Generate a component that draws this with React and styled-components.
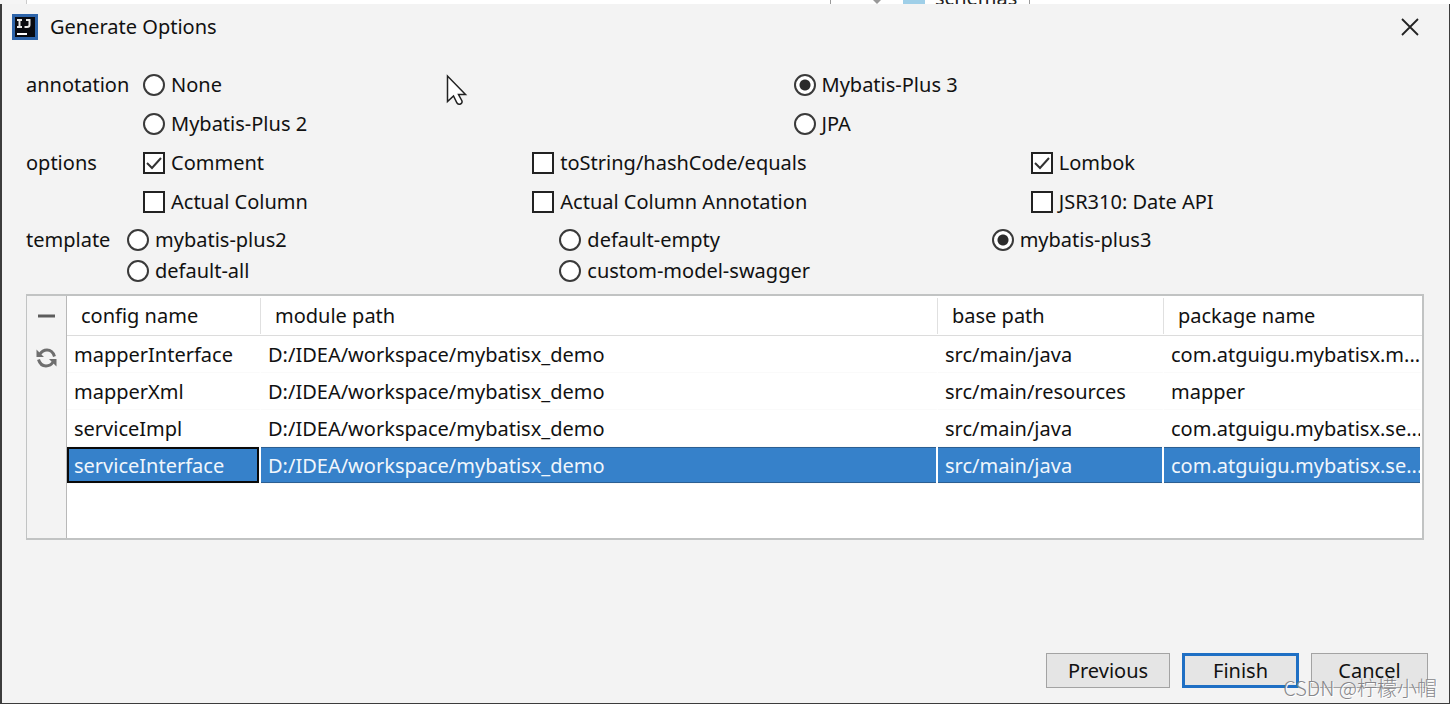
import React, { useState } from "react";
import styled, { createGlobalStyle, css } from "styled-components";

const GlobalStyle = createGlobalStyle`
  * { box-sizing: border-box; }
  body {
    margin: 0;
    background: #fff;
    color: #111;
    font-family: "Noto Sans", "Noto Sans CJK SC", sans-serif;
    font-size: 20px;
    line-height: 24px;
  }
`;

const Page = styled.div`
  position: relative;
  display: flex;
  flex-direction: column;
  min-height: 100vh;
`;

const EditorStrip = styled.div`
  display: flex;
  height: 4px;
  overflow: hidden;
  background: #fff;
`;

const StripGutter = styled.div`
  width: 27px;
  background: #f5f5f5;
  border-right: 1px solid #ccc;
`;

const StripSpace = styled.div`
  flex: 1;
  border-right: 1px solid #999;
`;

const StripTree = styled.div`
  display: flex;
  align-items: flex-end;
  width: 199px;
  padding-left: 40px;
  border-right: 1px solid #999;
`;

const StripArrow = styled.svg`
  width: 12px;
  height: 4px;
`;

const StripFolder = styled.div`
  width: 22px;
  height: 4px;
  margin: 0 10px 0 20px;
  background: #9fcfe8;
`;

const StripText = styled.span`
  height: 18px;
  line-height: 24px;
  color: #222;
`;

const StripRest = styled.div`
  width: 420px;
`;

const Dialog = styled.main`
  display: flex;
  flex: 1;
  flex-direction: column;
  margin-bottom: 2px;
  background: #f3f3f3;
  border: solid #3c3c3c;
  border-width: 0 1px 1px 2px;
`;

const TitleBar = styled.header`
  display: flex;
  align-items: center;
  height: 46px;
  padding: 0 25px 0 10px;
`;

const Logo = styled.svg`
  width: 26px;
  height: 26px;
`;

const Title = styled.h1`
  flex: 1;
  margin: 0 0 0 12px;
  font-size: 20px;
  font-weight: 400;
`;

const CloseButton = styled.button`
  display: flex;
  align-items: center;
  justify-content: center;
  width: 28px;
  height: 28px;
  padding: 0;
  background: none;
  border: 0;
`;

const Form = styled.div`
  display: flex;
  flex-direction: column;
  padding: 15px 25px 0 24px;
`;

const Group = styled.div`
  display: flex;
  align-items: flex-start;
  &:last-child {
    margin-top: 3px;
  }
`;

const GroupLabel = styled.div`
  width: ${(p) => p.$width}px;
  line-height: ${(p) => p.$row}px;
`;

const Choices = styled.div`
  display: grid;
  flex: 1;
  grid-template-columns: ${(p) => p.$columns};
  grid-auto-rows: ${(p) => p.$row}px;
`;

const Choice = styled.label`
  display: flex;
  align-items: center;
  gap: 6px;
  white-space: nowrap;
`;

const mark = css`
  appearance: none;
  flex: none;
  width: 22px;
  height: 22px;
  margin: 0;
  background: #fff;
`;

const Radio = styled.input`
  ${mark}
  border: 2px solid #3a3a3a;
  border-radius: 50%;
  &:checked {
    background: radial-gradient(circle, #2b2b2b 0 5px, #fff 6px);
  }
`;

const Check = styled.input`
  ${mark}
  border: 2px solid #222;
  &:checked {
    background: #fff
      url("data:image/svg+xml,%3Csvg xmlns='http://www.w3.org/2000/svg' viewBox='0 0 18 18'%3E%3Cpath d='M2 9l5 5 9-10' fill='none' stroke='%23333' stroke-width='2'/%3E%3C/svg%3E")
      center / 18px 18px no-repeat;
  }
`;

const TablePanel = styled.section`
  display: flex;
  height: 246px;
  margin: 8px 25px 0 24px;
  background: #fff;
  border: 2px solid #c1c3c3;
  border-width: 2px 2px 2px 1px;
`;

const ToolColumn = styled.div`
  display: flex;
  flex-direction: column;
  align-items: center;
  gap: 18px;
  width: 40px;
  padding-top: 8px;
  background: #f3f3f3;
  border-right: 1px solid #b8b8b8;
`;

const ToolButton = styled.button`
  display: flex;
  padding: 0;
  background: none;
  border: 0;
`;

const TableArea = styled.div`
  flex: 1;
  min-width: 0;
`;

const Table = styled.table`
  width: 100%;
  table-layout: fixed;
  border-collapse: separate;
  border-spacing: 0;
`;

const Column = styled.col`
  width: ${(p) => p.$width};
`;

const HeadCell = styled.th`
  height: 40px;
  padding: 0;
  font-weight: 400;
  text-align: left;
  border-bottom: 1px solid #dcdcdc;
`;

const HeadLabel = styled.div`
  padding: 6px 0 6px 14px;
  border-right: ${(p) => (p.$last ? "0" : "1px solid #e0e0e0")};
`;

const Cell = styled.td`
  height: 37px;
  padding: 2px 0 0 7px;
  overflow: hidden;
  white-space: nowrap;
  background-clip: padding-box;
  border-right: 2px solid #fff;
  border-bottom: 1px solid #fafafa;
  ${(p) =>
    p.$selected &&
    css`
      color: #f0f6fc;
      background-color: #3681ca;
      box-shadow: ${p.$focused
        ? "inset 0 0 0 2px #0a0a0a"
        : "inset 0 1px #2c5f93, inset 0 -1px #2c5f93"};
    `}
`;

const Footer = styled.footer`
  display: flex;
  justify-content: flex-end;
  gap: 12px;
  margin-top: auto;
  padding: 0 21px 15px;
`;

const Button = styled.button`
  width: ${(p) => (p.$wide ? 124 : 117)}px;
  height: 35px;
  padding: 0;
  color: #111;
  font: inherit;
  background: #e5e5e5;
  border: ${(p) => (p.$primary ? "3px solid #1e6fc4" : "1px solid #a3a3a3")};
`;

const Watermark = styled.div`
  position: absolute;
  right: 13px;
  bottom: 6px;
  color: #86868a;
  font-family: "Noto Sans CJK SC", sans-serif;
  font-weight: 300;
  text-shadow: 1px 1px #fff;
`;

const Cursor = styled.svg`
  position: absolute;
  top: 74px;
  left: 446px;
  width: 22px;
  height: 33px;
`;

const groups = [
  {
    name: "annotation",
    type: "radio",
    labelWidth: 117,
    row: 39,
    columns: "650fr 630fr",
    items: ["None", "Mybatis-Plus 3", "Mybatis-Plus 2", "JPA"],
    checked: ["Mybatis-Plus 3"],
  },
  {
    name: "options",
    type: "checkbox",
    labelWidth: 117,
    row: 39,
    columns: "389fr 498fr 393fr",
    items: [
      "Comment",
      "toString/hashCode/equals",
      "Lombok",
      "Actual Column",
      "Actual Column Annotation",
      "JSR310: Date API",
    ],
    checked: ["Comment", "Lombok"],
  },
  {
    name: "template",
    type: "radio",
    labelWidth: 101,
    row: 31,
    columns: "1fr 1fr 1fr",
    items: [
      "mybatis-plus2",
      "default-empty",
      "mybatis-plus3",
      "default-all",
      "custom-model-swagger",
    ],
    checked: ["mybatis-plus3"],
  },
];

const headings = ["config name", "module path", "base path", "package name"];

const rows = [
  ["mapperInterface", "D:/IDEA/workspace/mybatisx_demo", "src/main/java", "com.atguigu.mybatisx.m..."],
  ["mapperXml", "D:/IDEA/workspace/mybatisx_demo", "src/main/resources", "mapper"],
  ["serviceImpl", "D:/IDEA/workspace/mybatisx_demo", "src/main/java", "com.atguigu.mybatisx.se..."],
  ["serviceInterface", "D:/IDEA/workspace/mybatisx_demo", "src/main/java", "com.atguigu.mybatisx.se..."],
];

function OptionGroup({ group }) {
  const Mark = group.type === "radio" ? Radio : Check;
  const labelId = `${group.name}-label`;
  return (
    <Group role={group.type === "radio" ? "radiogroup" : "group"} aria-labelledby={labelId}>
      <GroupLabel id={labelId} $width={group.labelWidth} $row={group.row}>
        {group.name}
      </GroupLabel>
      <Choices $columns={group.columns} $row={group.row}>
        {group.items.map((item) => (
          <Choice key={item}>
            <Mark
              type={group.type}
              name={group.name}
              value={item}
              defaultChecked={group.checked.includes(item)}
            />
            {item}
          </Choice>
        ))}
      </Choices>
    </Group>
  );
}

export default function App() {
  const [selected, setSelected] = useState(3);
  return (
    <Page>
      <GlobalStyle />
      <EditorStrip>
        <StripGutter />
        <StripSpace />
        <StripTree>
          <StripArrow viewBox="0 0 12 4">
            <path d="M2 0h8L6 4z" fill="#999" />
          </StripArrow>
          <StripFolder />
          <StripText>schemas</StripText>
        </StripTree>
        <StripRest />
      </EditorStrip>
      <Dialog>
        <TitleBar>
          <Logo viewBox="0 0 26 26" aria-hidden="true">
            <rect width="26" height="26" fill="#2d64aa" />
            <rect x="3" y="3" width="20" height="20" fill="#080a10" />
            <path
              d="M5 6h5M7.500 6v7M5 13h5M14 6h3.500v5q0 2-2.500 2h-2.500"
              fill="none"
              stroke="#e8e8e8"
              strokeWidth="2"
            />
            <path d="M5 20h10" stroke="#fff" strokeWidth="2" />
          </Logo>
          <Title>Generate Options</Title>
          <CloseButton type="button" aria-label="Close">
            <svg width="18" height="18" viewBox="0 0 18 18">
              <path d="M1 1l16 16M17 1L1 17" stroke="#222" strokeWidth="1.800" />
            </svg>
          </CloseButton>
        </TitleBar>
        <Form>
          {groups.map((group) => (
            <OptionGroup key={group.name} group={group} />
          ))}
        </Form>
        <TablePanel>
          <ToolColumn>
            <ToolButton type="button" aria-label="Remove">
              <svg width="24" height="24" viewBox="0 0 24 24">
                <path d="M3 12h17" stroke="#5c5c5c" strokeWidth="3" />
              </svg>
            </ToolButton>
            <ToolButton type="button" aria-label="Refresh">
              <svg width="24" height="24" viewBox="0 0 24 24">
                <path
                  d="M4.500 8.500Q7.500 4 12 4Q17.500 4 19.500 10.500M18.500 15.500Q15.500 20 11 20Q5.500 20 3.500 13.500"
                  fill="none"
                  stroke="#6e6e6e"
                  strokeWidth="3"
                />
                <path d="M1.500 3.500v7.500h7.500zM21.500 20.500v-7.500h-7.500z" fill="#6e6e6e" />
              </svg>
            </ToolButton>
          </ToolColumn>
          <TableArea>
            <Table>
              <colgroup>
                <Column $width="194px" />
                <Column $width="auto" />
                <Column $width="226px" />
                <Column $width="258px" />
              </colgroup>
              <thead>
                <tr>
                  {headings.map((heading, i) => (
                    <HeadCell key={heading} scope="col">
                      <HeadLabel $last={i === headings.length - 1}>{heading}</HeadLabel>
                    </HeadCell>
                  ))}
                </tr>
              </thead>
              <tbody>
                {rows.map((row, r) => (
                  <tr key={row[0]} onClick={() => setSelected(r)}>
                    {row.map((text, c) => (
                      <Cell key={c} $selected={selected === r} $focused={c === 0}>
                        {text}
                      </Cell>
                    ))}
                  </tr>
                ))}
              </tbody>
            </Table>
          </TableArea>
        </TablePanel>
        <Footer>
          <Button type="button" $wide>
            Previous
          </Button>
          <Button type="button" $primary>
            Finish
          </Button>
          <Button type="button">Cancel</Button>
        </Footer>
      </Dialog>
      <Cursor viewBox="0 0 22 33" aria-hidden="true">
        <path
          d="M1.500 2v25.500l6-5.500 3.500 7q1.500 2 3.500 1t1.500-3l-3.500-6.500h7z"
          fill="#fff"
          stroke="#222"
          strokeWidth="1.500"
        />
      </Cursor>
      <Watermark>CSDN @柠檬小帽</Watermark>
    </Page>
  );
}
